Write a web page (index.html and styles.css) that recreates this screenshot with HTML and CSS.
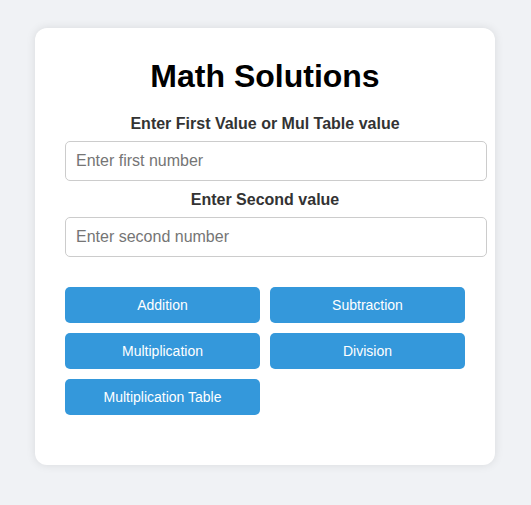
FILE: index.html
```html
<!DOCTYPE html>
<html lang="en">
<head>
<meta charset="UTF-8">
<title>Math Solutions</title>
<link rel="stylesheet" href="styles.css">
</head>
<body>
<div class="container">
  <h1 class="title">Math Solutions</h1>
  <label class="label" for="first">Enter First Value or Mul Table value</label>
  <input class="input" id="first" type="number" placeholder="Enter first number">
  <label class="label second" for="second">Enter Second value</label>
  <input class="input" id="second" type="number" placeholder="Enter second number">
  <div class="buttons">
    <button class="btn">Addition</button>
    <button class="btn">Subtraction</button>
    <button class="btn">Multiplication</button>
    <button class="btn">Division</button>
    <button class="btn">Multiplication Table</button>
  </div>
</div>
</body>
</html>
```
FILE: styles.css
```css
body {
  margin: 8px;
  padding-right: 1px;
  background: #f0f2f5;
  font-family: "Liberation Sans", Arial, sans-serif;
}
.container {
  width: 400px;
  margin: 20px auto;
  padding: 30px;
  background: #fff;
  border-radius: 12px;
  box-shadow: 0 0 10px rgba(0, 0, 0, 0.1);
}
.title {
  margin: 0 0 20px;
  font-size: 32px;
  line-height: 37px;
  text-align: center;
  color: #000;
}
.label {
  display: block;
  text-align: center;
  font-weight: bold;
  font-size: 16px;
  line-height: 18px;
  color: #333;
  margin-bottom: 8px;
}
.label.second {
  margin-top: 10px;
}
.input {
  display: block;
  width: 100%;
  box-sizing: content-box;
  padding: 10px;
  border: 1px solid #ccc;
  border-radius: 5px;
  font-family: "Liberation Sans", Arial, sans-serif;
  font-size: 16px;
  line-height: 18px;
  height: 18px;
  margin: 0;
}
.input::placeholder {
  color: #757575;
}
.buttons {
  display: grid;
  grid-template-columns: 1fr 1fr;
  gap: 10px;
  margin-top: 30px;
  margin-bottom: 20px;
}
.btn {
  height: 36px;
  padding: 0 10px;
  border: none;
  border-radius: 5px;
  background: #3498db;
  color: #fff;
  font-family: "Liberation Sans", Arial, sans-serif;
  font-size: 14px;
  cursor: pointer;
}
```
